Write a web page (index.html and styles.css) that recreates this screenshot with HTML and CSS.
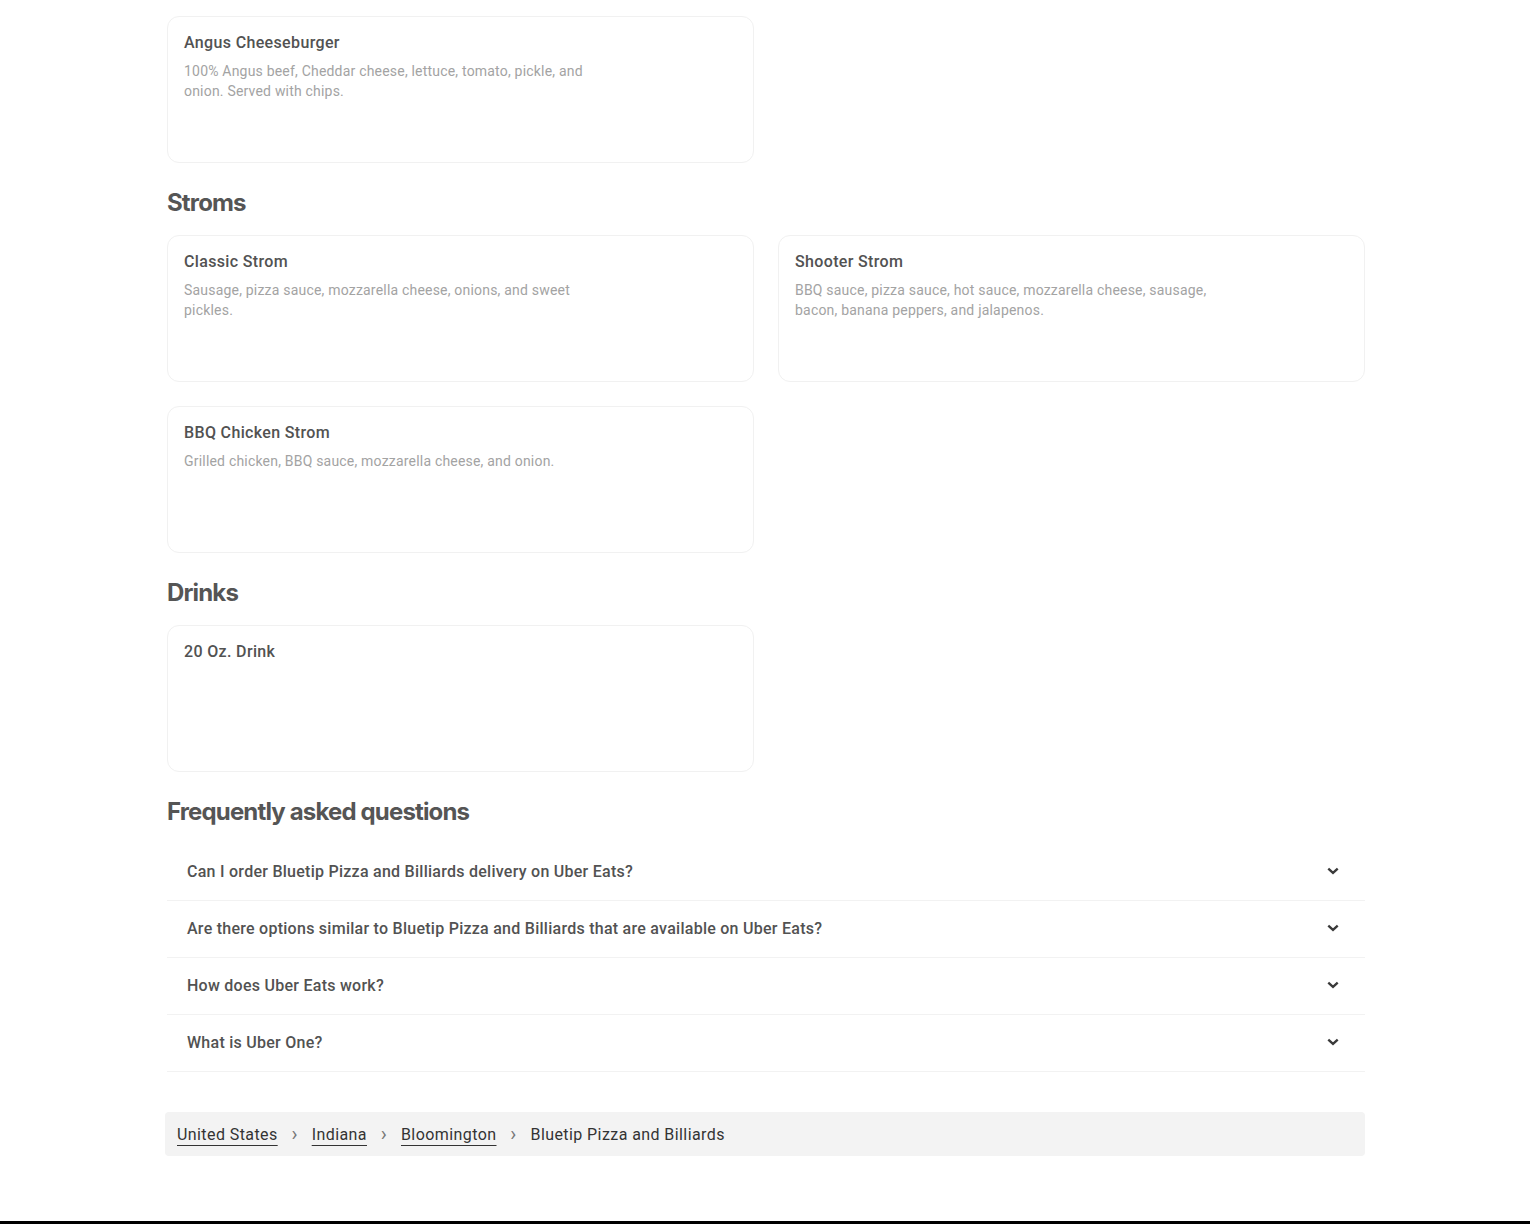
FILE: index.html
```html
<!DOCTYPE html>
<html lang="en">
<head>
<meta charset="utf-8">
<title>Bluetip Pizza and Billiards</title>
<link rel="stylesheet" href="styles.css">
</head>
<body>
<main class="page">
  <section class="section">
    <div class="grid">
      <div class="card">
        <div class="card-title">Angus Cheeseburger</div>
        <div class="card-desc">100% Angus beef, Cheddar cheese, lettuce, tomato, pickle, and onion. Served with chips.</div>
      </div>
    </div>
  </section>

  <section class="section">
    <h2 class="section-title">Stroms</h2>
    <div class="grid">
      <div class="card">
        <div class="card-title">Classic Strom</div>
        <div class="card-desc">Sausage, pizza sauce, mozzarella cheese, onions, and sweet pickles.</div>
      </div>
      <div class="card">
        <div class="card-title">Shooter Strom</div>
        <div class="card-desc">BBQ sauce, pizza sauce, hot sauce, mozzarella cheese, sausage, bacon, banana peppers, and jalapenos.</div>
      </div>
      <div class="card">
        <div class="card-title">BBQ Chicken Strom</div>
        <div class="card-desc">Grilled chicken, BBQ sauce, mozzarella cheese, and onion.</div>
      </div>
    </div>
  </section>

  <section class="section">
    <h2 class="section-title">Drinks</h2>
    <div class="grid">
      <div class="card">
        <div class="card-title">20 Oz. Drink</div>
      </div>
    </div>
  </section>

  <section class="section">
    <h2 class="section-title faq-title">Frequently asked questions</h2>
    <div class="faq">
      <div class="faq-row"><span class="faq-q">Can I order Bluetip Pizza and Billiards delivery on Uber Eats?</span><svg class="chev" viewBox="0 0 12 8" width="12" height="8"><path d="M1.3 1.6 6 5.8l4.7-4.2" fill="none" stroke="#3a3a3a" stroke-width="2.4"/></svg></div>
      <div class="faq-row"><span class="faq-q">Are there options similar to Bluetip Pizza and Billiards that are available on Uber Eats?</span><svg class="chev" viewBox="0 0 12 8" width="12" height="8"><path d="M1.3 1.6 6 5.8l4.7-4.2" fill="none" stroke="#3a3a3a" stroke-width="2.4"/></svg></div>
      <div class="faq-row"><span class="faq-q">How does Uber Eats work?</span><svg class="chev" viewBox="0 0 12 8" width="12" height="8"><path d="M1.3 1.6 6 5.8l4.7-4.2" fill="none" stroke="#3a3a3a" stroke-width="2.4"/></svg></div>
      <div class="faq-row"><span class="faq-q">What is Uber One?</span><svg class="chev" viewBox="0 0 12 8" width="12" height="8"><path d="M1.3 1.6 6 5.8l4.7-4.2" fill="none" stroke="#3a3a3a" stroke-width="2.4"/></svg></div>
    </div>
  </section>

  <nav class="crumbs">
    <a class="crumb-link" href="#">United States</a>
    <span class="crumb-sep">›</span>
    <a class="crumb-link" href="#">Indiana</a>
    <span class="crumb-sep">›</span>
    <a class="crumb-link" href="#">Bloomington</a>
    <span class="crumb-sep">›</span>
    <span class="crumb-current">Bluetip Pizza and Billiards</span>
  </nav>
</main>
<footer class="footer"></footer>
</body>
</html>
```

FILE: styles.css
```css
* { box-sizing: border-box; }

html, body {
  margin: 0;
  padding: 0;
  background: #ffffff;
}

body {
  font-family: Roboto, "Liberation Sans", sans-serif;
  color: #4a4a4a;
}

.page {
  width: 1198px;
  margin-left: calc(50% - 598px);
  padding-top: 16px;
}

.section-title {
  margin: 24px 0 16px;
  font-family: Inter, "Liberation Sans", sans-serif;
  font-size: 24px;
  line-height: 32px;
  font-weight: 700;
  letter-spacing: -0.85px;
  color: #555555;
}

.grid {
  display: grid;
  grid-template-columns: 1fr 1fr;
  gap: 24px;
}

.card {
  height: 147px;
  padding: 16px;
  border: 1px solid #f1f1f1;
  border-radius: 12px;
  background: #ffffff;
}

.card-title {
  font-size: 16px;
  line-height: 20px;
  font-weight: 500;
  letter-spacing: 0.35px;
  color: #525252;
  margin-bottom: 8px;
}

.card-desc {
  max-width: 425px;
  font-size: 14px;
  line-height: 20px;
  letter-spacing: 0.2px;
  color: #a3a3a3;
}

.faq {
  display: flex;
  flex-direction: column;
}

.faq-row {
  height: 57px;
  display: flex;
  align-items: center;
  justify-content: space-between;
  padding: 0 26px 2px 20px;
  border-bottom: 1px solid #f2f2f2;
}

.faq-q {
  font-size: 16px;
  font-weight: 500;
  letter-spacing: 0.26px;
  color: #525252;
}

.chev {
  display: block;
}

.crumbs {
  margin: 40px 0 0 -2px;
  width: 1200px;
  height: 44px;
  display: flex;
  align-items: center;
  gap: 13px;
  padding: 0 12px;
  background: #f3f3f3;
  border-radius: 4px;
  font-size: 16px;
  letter-spacing: 0.42px;
}

.crumb-link {
  color: #333333;
  text-decoration: underline;
  text-underline-offset: 5px;
  text-decoration-thickness: 1px;
}

.crumb-sep {
  color: #777777;
  font-size: 20px;
  width: 8px;
  text-align: center;
}

.crumb-current {
  color: #333333;
}

.footer {
  margin-top: 65px;
  height: 3px;
  background: #000000;
}
```
